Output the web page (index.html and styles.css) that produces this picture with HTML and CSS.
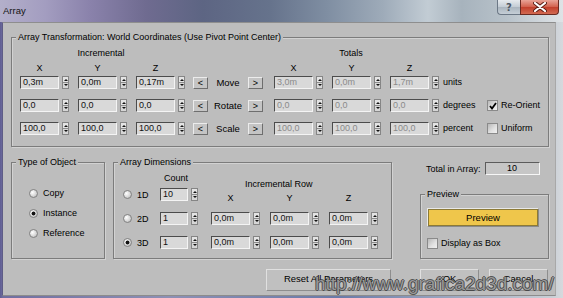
FILE: index.html
```html
<!DOCTYPE html>
<html>
<head>
<meta charset="utf-8">
<title>Array</title>
<link rel="stylesheet" href="styles.css">
</head>
<body>
<div class="window">
  <div class="titlebar">
    <span class="title">Array</span>
    <div class="caption">
      <span class="cbtn help">?</span>
      <span class="cbtn close"><svg width="14" height="10" viewBox="0 0 14 10"><path d="M2 1 L12 9 M12 1 L2 9" stroke="#5a1d14" stroke-width="4" stroke-linecap="round"/><path d="M2 1 L12 9 M12 1 L2 9" stroke="#ffffff" stroke-width="2.2" stroke-linecap="round"/></svg></span>
    </div>
  </div>

  <div class="client">
    <div class="group transform">
      <div class="legend">Array Transformation: World Coordinates (Use Pivot Point Center)</div>
      <div class="hrow1"><span class="h-inc">Incremental</span><span class="h-tot">Totals</span></div>
      <div class="hrow2">
        <span class="ax">X</span><span class="ax">Y</span><span class="ax">Z</span>
        <span class="ax tot0">X</span><span class="ax">Y</span><span class="ax">Z</span>
      </div>

      <div class="trow first">
        <span class="spin"><span class="fld">0,3m</span><span class="sp"><i class="up"></i><i class="dn"></i></span></span>
        <span class="spin"><span class="fld">0,0m</span><span class="sp"><i class="up"></i><i class="dn"></i></span></span>
        <span class="spin"><span class="fld">0,17m</span><span class="sp"><i class="up"></i><i class="dn"></i></span></span>
        <span class="arr l">&lt;</span><span class="op">Move</span><span class="arr r">&gt;</span>
        <span class="spin"><span class="fld off">3,0m</span><span class="sp"><i class="up"></i><i class="dn"></i></span></span>
        <span class="spin"><span class="fld off">0,0m</span><span class="sp"><i class="up"></i><i class="dn"></i></span></span>
        <span class="spin"><span class="fld off">1,7m</span><span class="sp"><i class="up"></i><i class="dn"></i></span></span>
        <span class="unit">units</span>
      </div>
      <div class="trow">
        <span class="spin"><span class="fld">0,0</span><span class="sp"><i class="up"></i><i class="dn"></i></span></span>
        <span class="spin"><span class="fld">0,0</span><span class="sp"><i class="up"></i><i class="dn"></i></span></span>
        <span class="spin"><span class="fld">0,0</span><span class="sp"><i class="up"></i><i class="dn"></i></span></span>
        <span class="arr l">&lt;</span><span class="op">Rotate</span><span class="arr r">&gt;</span>
        <span class="spin"><span class="fld off">0,0</span><span class="sp"><i class="up"></i><i class="dn"></i></span></span>
        <span class="spin"><span class="fld off">0,0</span><span class="sp"><i class="up"></i><i class="dn"></i></span></span>
        <span class="spin"><span class="fld off">0,0</span><span class="sp"><i class="up"></i><i class="dn"></i></span></span>
        <span class="unit">degrees</span>
        <span class="cb"><svg width="8" height="8" viewBox="0 0 8 8"><path d="M1 4 L3 6.5 L7 1" fill="none" stroke="#000" stroke-width="1.8"/></svg></span><span class="cblabel">Re-Orient</span>
      </div>
      <div class="trow">
        <span class="spin"><span class="fld">100,0</span><span class="sp"><i class="up"></i><i class="dn"></i></span></span>
        <span class="spin"><span class="fld">100,0</span><span class="sp"><i class="up"></i><i class="dn"></i></span></span>
        <span class="spin"><span class="fld">100,0</span><span class="sp"><i class="up"></i><i class="dn"></i></span></span>
        <span class="arr l">&lt;</span><span class="op">Scale</span><span class="arr r">&gt;</span>
        <span class="spin"><span class="fld off">100,0</span><span class="sp"><i class="up"></i><i class="dn"></i></span></span>
        <span class="spin"><span class="fld off">100,0</span><span class="sp"><i class="up"></i><i class="dn"></i></span></span>
        <span class="spin"><span class="fld off">100,0</span><span class="sp"><i class="up"></i><i class="dn"></i></span></span>
        <span class="unit">percent</span>
        <span class="cb"></span><span class="cblabel">Uniform</span>
      </div>
    </div>

    <div class="lower">
      <div class="group type">
        <div class="legend">Type of Object</div>
        <div class="ropt first"><span class="radio"></span><span>Copy</span></div>
        <div class="ropt"><span class="radio on"></span><span>Instance</span></div>
        <div class="ropt"><span class="radio"></span><span>Reference</span></div>
      </div>

      <div class="group dims">
        <div class="legend">Array Dimensions</div>
        <div class="dims-body">
          <div class="dleft">
            <div class="count-h">Count</div>
            <div class="drow d1"><span class="radio"></span><span class="dlab">1D</span><span class="spin"><span class="fld cnt">10</span><span class="sp"><i class="up"></i><i class="dn"></i></span></span></div>
            <div class="drow"><span class="radio"></span><span class="dlab">2D</span><span class="spin"><span class="fld cnt">1</span><span class="sp"><i class="up"></i><i class="dn"></i></span></span></div>
            <div class="drow"><span class="radio on"></span><span class="dlab">3D</span><span class="spin"><span class="fld cnt">1</span><span class="sp"><i class="up"></i><i class="dn"></i></span></span></div>
          </div>
          <div class="dright">
            <div class="ir-h">Incremental Row</div>
            <div class="dax"><span class="ax">X</span><span class="ax">Y</span><span class="ax">Z</span></div>
            <div class="drow r2">
              <span class="spin"><span class="fld">0,0m</span><span class="sp"><i class="up"></i><i class="dn"></i></span></span>
              <span class="spin"><span class="fld">0,0m</span><span class="sp"><i class="up"></i><i class="dn"></i></span></span>
              <span class="spin"><span class="fld">0,0m</span><span class="sp"><i class="up"></i><i class="dn"></i></span></span>
            </div>
            <div class="drow">
              <span class="spin"><span class="fld">0,0m</span><span class="sp"><i class="up"></i><i class="dn"></i></span></span>
              <span class="spin"><span class="fld">0,0m</span><span class="sp"><i class="up"></i><i class="dn"></i></span></span>
              <span class="spin"><span class="fld">0,0m</span><span class="sp"><i class="up"></i><i class="dn"></i></span></span>
            </div>
          </div>
        </div>
      </div>

      <div class="rcol">
        <div class="total"><span>Total in Array:</span><span class="totfld">10</span></div>
        <div class="group preview">
          <div class="legend">Preview</div>
          <div class="pvbtn">Preview</div>
          <div class="pvbox"><span class="cb"></span><span class="cblabel">Display as Box</span></div>
        </div>
      </div>
    </div>

    <div class="btnrow">
      <span class="btn reset">Reset All Parameters</span>
      <span class="btn ok">OK</span>
      <span class="btn cancel">Cancel</span>
    </div>
  </div>

  <div class="watermark">http://www.grafica2d3d.com/</div>
</div>
</body>
</html>
```

FILE: styles.css
```css
html, body {
  margin: 0;
  padding: 0;
}
body {
  width: 563px;
  height: 298px;
  overflow: hidden;
  font-family: "Liberation Sans", Arial, sans-serif;
  font-size: 9px;
  color: #000;
}
.window {
  position: relative;
  width: 563px;
  height: 298px;
  display: flex;
  flex-direction: column;
  background: linear-gradient(90deg, #5f5d92 0, #706ea0 3px, #8d90b4 30%, #6a7aa8 60%, #c9cfd6 98%, #d6d9dd 100%);
}

/* title bar */
.titlebar {
  height: 22px;
  flex: none;
  display: flex;
  align-items: flex-start;
  background: linear-gradient(90deg, #b3afca 0%, #a39dc0 8%, #8a82ab 16%, #6f6b90 26%, #5d6583 36%, #66738c 48%, #7f8ea2 58%, #9eabb9 68%, #c2ccd4 76%, #a7b3bd 82%, #b8c2ca 90%, #dfe3e6 100%);
}
.title {
  padding-left: 3px;
  line-height: 22px;
  font-size: 9.5px;
  color: #141414;
}
.caption {
  margin-left: auto;
  margin-right: 4px;
  display: flex;
}
.cbtn {
  box-sizing: border-box;
  height: 15px;
  display: flex;
  align-items: center;
  justify-content: center;
}
.help {
  width: 23px;
  border: 1px solid #6c7886;
  border-top: none;
  border-right: none;
  border-bottom-left-radius: 4px;
  background: linear-gradient(#e6eaee, #c3ccd4 50%, #aab5bf 51%, #c5ced6);
  color: #4d5764;
  font-family: "DejaVu Sans", sans-serif;
  font-size: 10px;
  font-weight: bold;
}
.close {
  width: 39px;
  border: 1px solid #6a2b22;
  border-top: none;
  border-bottom-right-radius: 4px;
  background: linear-gradient(#e9a497, #d2604c 50%, #c23f2b 51%, #d26a52);
}

/* client area */
.client {
  box-sizing: border-box;
  margin-left: 2px;
  width: 554px;
  height: 274px;
  flex: none;
  border-left: 1px solid #5e5c86;
  border-top: 1px solid #8e8e8e;
  border-right: 1px solid #a8a8a8;
  border-bottom: 1px solid #8c8c8c;
  background: #bdbdbd;
  display: flex;
  flex-direction: column;
}

.group {
  box-sizing: border-box;
  border: 1px solid #7c7c7c;
  box-shadow: inset 1px 1px 0 #d2d2d2, 1px 1px 0 #d2d2d2;
}
.legend {
  width: fit-content;
  margin: -7px 0 0 4px;
  padding: 0 2px;
  line-height: 12px;
  background: #bdbdbd;
}

/* transform group */
.transform {
  margin: 14px 0 0 8px;
  width: 538px;
  padding: 0 0 11px 0;
}
.hrow1, .hrow2 {
  display: flex;
  line-height: 12px;
  margin-left: 8px;
}
.hrow1 { margin-top: 4px; }
.hrow2 { margin-top: 3px; }
.h-inc { width: 162px; text-align: center; }
.h-tot { width: 154px; margin-left: 92px; text-align: center; }
.ax { width: 39px; text-align: center; }
.ax + .ax { margin-left: 19px; }
.ax.tot0 { margin-left: 99px; }

.trow {
  display: flex;
  align-items: center;
  height: 13px;
  margin: 10px 0 0 8px;
}
.trow.first { margin-top: 2px; }

.spin {
  display: flex;
  align-items: center;
  gap: 3px;
}
.trow .spin + .spin { margin-left: 9px; }
.fld {
  box-sizing: border-box;
  width: 39px;
  height: 13px;
  border: 1px solid;
  border-color: #4c4c4c #f4f4f4 #f4f4f4 #4c4c4c;
  background: #d9d9d9;
  padding-left: 2px;
  line-height: 11px;
  color: #111;
  white-space: nowrap;
  overflow: hidden;
}
.fld.off { color: #8a8a8a; }
.fld.cnt { width: 28px; }
.sp {
  box-sizing: border-box;
  width: 7px;
  height: 13px;
  border: 1px solid #858585;
  background: linear-gradient(#e4e4e4 0 5px, #8c8c8c 5px 6px, #d6d6d6 6px);
  display: flex;
  flex-direction: column;
  align-items: center;
  justify-content: center;
  gap: 3px;
}
.sp i {
  display: block;
  width: 0;
  height: 0;
  border-left: 2px solid transparent;
  border-right: 2px solid transparent;
}
.sp .up { border-bottom: 2px solid #111; }
.sp .dn { border-top: 2px solid #111; }

.arr {
  box-sizing: border-box;
  width: 15px;
  height: 12px;
  border: 1px solid;
  border-color: #ececec #6e6e6e #6e6e6e #ececec;
  background: #c4c4c4;
  display: flex;
  align-items: center;
  justify-content: center;
  line-height: 10px;
  font-size: 9px;
}
.arr.l { margin-left: 8px; }
.op {
  width: 40px;
  text-align: center;
  line-height: 13px;
  font-size: 9.5px;
}
.arr.r + .spin { margin-left: 11px; }
.unit {
  width: 44px;
  margin-left: 4px;
  line-height: 13px;
}

.cb {
  box-sizing: border-box;
  width: 11px;
  height: 11px;
  border: 1px solid #8a8a8a;
  background: linear-gradient(135deg, #b8b8b8, #e2e2e2 60%, #f0f0f0);
  display: flex;
  align-items: center;
  justify-content: center;
}
.cblabel {
  margin-left: 3px;
  line-height: 13px;
}

/* lower section */
.lower {
  display: flex;
  height: 97px;
  margin: 15px 0 0 8px;
  flex: none;
}
.type {
  width: 94px;
}
.ropt {
  display: flex;
  align-items: center;
  height: 12px;
  margin: 8px 0 0 17px;
  gap: 5px;
}
.ropt.first { margin-top: 19px; }
.radio {
  box-sizing: border-box;
  width: 9px;
  height: 9px;
  border-radius: 50%;
  border: 1px solid #828282;
  background: radial-gradient(circle at 35% 35%, #ffffff, #d4d4d4 60%, #a8a8a8);
  flex: none;
}
.radio.on {
  background: radial-gradient(circle, #111 0 1.6px, transparent 2.3px), radial-gradient(circle at 35% 35%, #ffffff, #d4d4d4 60%, #a8a8a8);
}

.dims {
  width: 279px;
  margin-left: 8px;
}
.dims-body {
  display: flex;
}
.dleft {
  margin-left: 9px;
  width: 75px;
}
.count-h {
  margin: 4px 0 0 37px;
  width: 32px;
  text-align: center;
  line-height: 12px;
}
.drow {
  display: flex;
  align-items: center;
  height: 13px;
  margin-top: 11px;
}
.drow.d1 { margin-top: 4px; }
.dlab {
  width: 19px;
  margin-left: 5px;
  margin-right: 4px;
}
.dright {
  margin-left: 13px;
}
.ir-h {
  margin: 10px 0 0 34px;
  line-height: 12px;
}
.dax {
  display: flex;
  line-height: 12px;
  margin-top: 2px;
}
.dax .ax + .ax { margin-left: 20px; }
.drow.r2 { margin-top: 8px; }
.dright .spin + .spin { margin-left: 10px; }

.rcol {
  width: 129px;
  margin-left: 28px;
  display: flex;
  flex-direction: column;
}
.total {
  display: flex;
  align-items: center;
  height: 13px;
  margin-left: 6px;
  gap: 4px;
}
.totfld {
  box-sizing: border-box;
  width: 55px;
  height: 13px;
  border: 1px solid;
  border-color: #5c5c5c #f6f6f6 #f6f6f6 #5c5c5c;
  background: #c6c6c6;
  text-align: center;
  line-height: 11px;
}
.preview {
  margin-top: 19px;
  flex: 1;
}
.pvbtn {
  box-sizing: border-box;
  width: 112px;
  height: 19px;
  margin: 8px 0 0 6px;
  border: 1px solid;
  border-color: #e8e8e8 #8a8a8a #8a8a8a #e8e8e8;
  box-shadow: inset 0 0 0 1px #8c7a36;
  background: #efc64b;
  text-align: center;
  line-height: 17px;
  font-size: 9.5px;
}
.pvbox {
  display: flex;
  align-items: center;
  margin: 10px 0 0 6px;
}

/* bottom buttons */
.btnrow {
  display: flex;
  margin-top: 10px;
  height: 22px;
}
.btn {
  box-sizing: border-box;
  height: 22px;
  border: 1px solid;
  border-color: #e0e0e0 #8e8e8e #8e8e8e #e0e0e0;
  background: #c0c0c0;
  display: flex;
  align-items: center;
  justify-content: center;
  font-size: 9.5px;
  padding-bottom: 3px;
}
.reset { width: 125px; margin-left: 263px; }
.ok { width: 59px; margin-left: 29px; }
.cancel { width: 59px; margin-left: 10px; }

.watermark {
  position: absolute;
  left: 315px;
  top: 273px;
  font-family: "Liberation Sans", Arial, sans-serif;
  font-size: 19px;
  line-height: 22px;
  color: rgba(236, 236, 236, 0.55);
  white-space: nowrap;
  pointer-events: none;
  text-shadow: -1px 0 0 rgba(50,50,50,0.75), 1px 0 0 rgba(50,50,50,0.75), 0 -1px 0 rgba(50,50,50,0.75), 0 1px 0 rgba(50,50,50,0.75);
}
```
